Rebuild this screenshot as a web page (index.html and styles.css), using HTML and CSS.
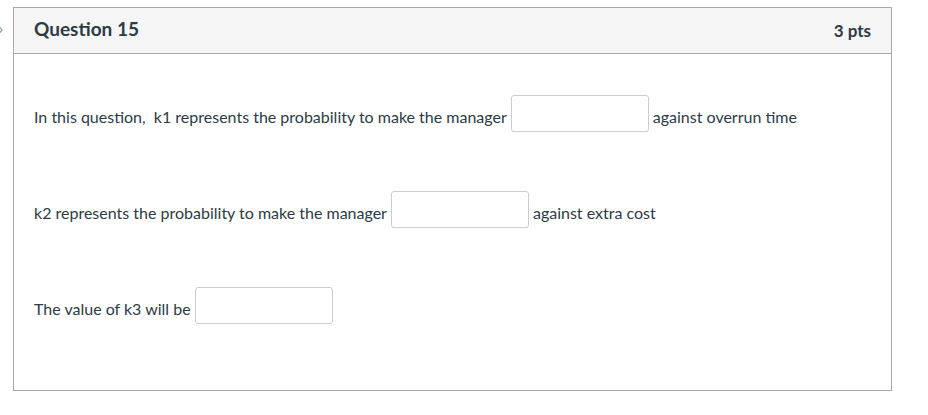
FILE: index.html
```html
<!DOCTYPE html>
<html>
<head>
<meta charset="utf-8">
<link rel="stylesheet" href="styles.css">
</head>
<body>
<svg class="chev" width="8" height="14" viewBox="0 0 8 14"><path d="M1 1 L6 7 L1 13" fill="none" stroke="#8fa3b3" stroke-width="1.3"/></svg>
<div class="question">
  <div class="q-header">
    <span class="q-title">Question 15</span>
    <span class="q-pts">3 pts</span>
  </div>
  <div class="q-body">
    <div class="row"><span class="txt">In this question,&nbsp; k1 represents the probability to make the manager</span><input class="blank" type="text"><span class="txt">against overrun time</span></div>
    <div class="row"><span class="txt">k2 represents the probability to make the manager</span><input class="blank" type="text"><span class="txt">against extra cost</span></div>
    <div class="row"><span class="txt">The value of k3 will be</span><input class="blank" type="text"></div>
  </div>
</div>
</body>
</html>
```
FILE: styles.css
```css
html, body {
  margin: 0;
  padding: 0;
  background: #ffffff;
}
body {
  font-family: Lato, "Open Sans", sans-serif;
  color: #2d3b45;
  position: relative;
  padding-top: 7px;
  padding-left: 13px;
}
.chev {
  position: absolute;
  left: -4px;
  top: 23px;
}
.question {
  width: 877px;
  height: 382px;
  border: 1px solid #a9a9a9;
}
.q-header {
  height: 45px;
  background: #f5f5f5;
  border-bottom: 1px solid #a9a9a9;
  display: flex;
  align-items: center;
  justify-content: space-between;
  padding: 0 20px;
}
.q-title {
  font-size: 19px;
  font-weight: bold;
  padding-bottom: 5px;
}
.q-pts {
  font-size: 17px;
  font-weight: bold;
  color: #2d3b45;
}
.q-body {
  padding: 41px 20px 0 20px;
  display: flex;
  flex-direction: column;
  gap: 59px;
}
.row {
  font-size: 16px;
  height: 37px;
  display: flex;
  align-items: center;
  gap: 4px;
  white-space: nowrap;
}
.txt {
  padding-top: 5px;
}
.blank {
  width: 138px;
  height: 37px;
  box-sizing: border-box;
  border: 1px solid #c7cdd1;
  border-radius: 3px;
  margin: 0;
  padding: 0 6px;
  font-family: inherit;
  font-size: 16px;
  flex: none;
}
```
